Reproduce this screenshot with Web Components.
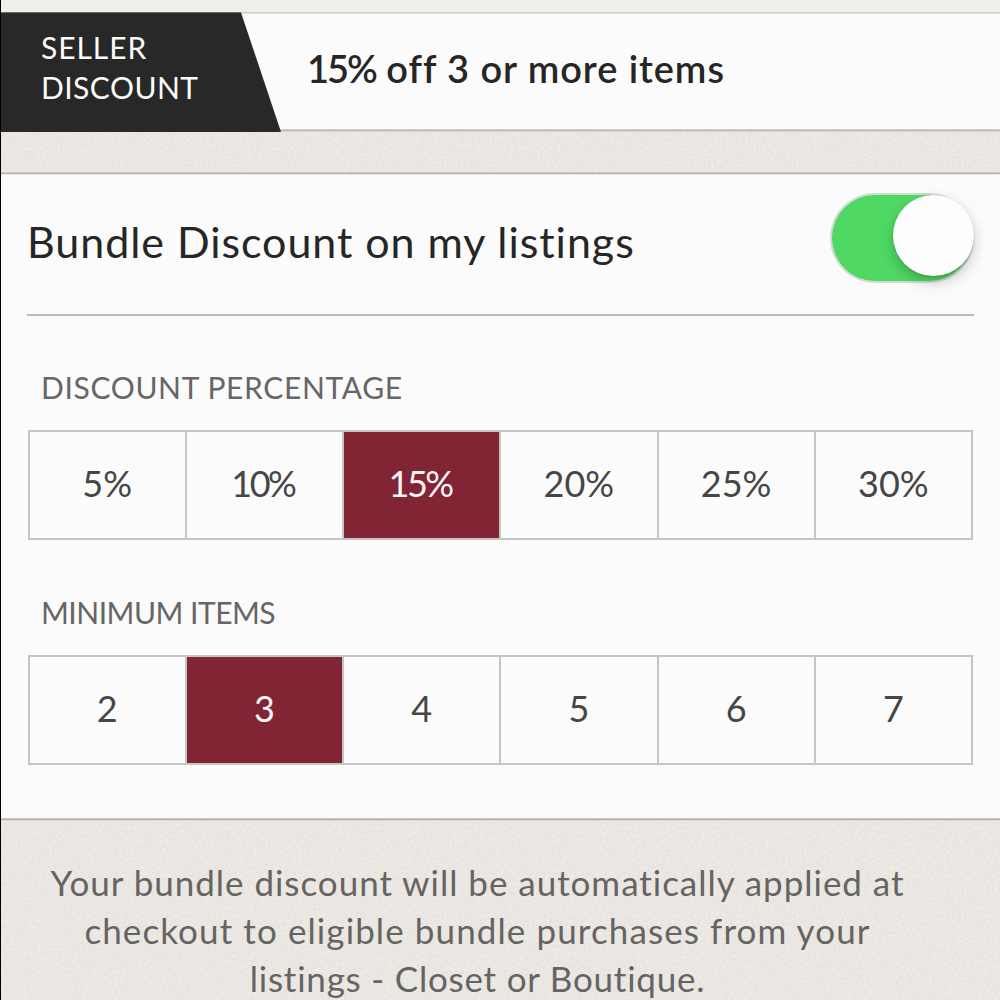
<!DOCTYPE html>
<html lang="en">
<head>
<meta charset="utf-8">
<title>Seller Discount</title>
<style>
    body {
        margin: 0;
        width: 1000px;
        height: 1000px;
        overflow: hidden;
        font-family: Lato, "Open Sans", sans-serif;
        font-kerning: normal;
    }
</style>
</head>
<body>
<discount-screen>
    <seller-banner>
        <span slot="line1" style="letter-spacing: 0.95px">SELLER</span>
        <span slot="line2" style="letter-spacing: 0.45px">DISCOUNT</span>
        <span slot="offer"><span style="letter-spacing: -2px">15%</span> off 3 or more items</span>
    </seller-banner>
    <settings-panel>
        <toggle-row>Bundle Discount on my listings</toggle-row>
        <segment-picker label="DISCOUNT PERCENTAGE" options="5%,10%,15%,20%,25%,30%" value="15%" style="--label-spacing: 0.65px"></segment-picker>
        <segment-picker label="MINIMUM ITEMS" options="2,3,4,5,6,7" value="3" style="--label-spacing: -0.5px"></segment-picker>
    </settings-panel>
    <foot-note>
        <span style="letter-spacing: 0.97px">Your bundle discount will be automatically applied at</span>
        <span style="letter-spacing: 1.1px">checkout to eligible bundle purchases from your</span>
        <span style="letter-spacing: 0.77px">listings - Closet or Boutique.</span>
    </foot-note>
</discount-screen>

<script>
class DiscountScreen extends HTMLElement {
    connectedCallback() {
        this.attachShadow({ mode: 'open' });
        this.shadowRoot.innerHTML = `
            <style>
                :host {
                    display: flex;
                    flex-direction: column;
                    box-sizing: border-box;
                    height: 1000px;
                    border-left: 1px solid #000;
                    background-color: #eae7e2;
                    /* paper grain */
                    background-image: url("data:image/svg+xml,%3Csvg xmlns='http://www.w3.org/2000/svg' width='250' height='250'%3E%3Cfilter id='n' x='0' y='0' width='100%25' height='100%25' color-interpolation-filters='sRGB'%3E%3CfeTurbulence type='fractalNoise' baseFrequency='0.35' numOctaves='2' stitchTiles='stitch'/%3E%3CfeColorMatrix values='0.06 0 0 0 0.889 0.06 0 0 0 0.877 0.06 0 0 0 0.857 0 0 0 0 1'/%3E%3C/filter%3E%3Crect width='250' height='250' filter='url(%23n)'/%3E%3C/svg%3E");
                }
                .top {
                    flex: none;
                    height: 12px;
                    background: #f1efeb;
                }
            </style>
            <div class="top"></div>
            <slot></slot>
        `;
    }
}

class SellerBanner extends HTMLElement {
    connectedCallback() {
        this.attachShadow({ mode: 'open' });
        this.shadowRoot.innerHTML = `
            <style>
                :host {
                    display: flex;
                    flex: none;
                    box-sizing: border-box;
                    height: 120px;
                    margin-bottom: 40px;
                    background: linear-gradient(#c9c9c9 0 1px, #e4e4e4 1px 2px, #fbfbfb 2px 117px, #d0cfcd 117px 118px, #b9b6b3 118px 119px, #d9d6d3 119px);
                }
                .tag {
                    display: flex;
                    flex-direction: column;
                    box-sizing: border-box;
                    width: 280px;
                    padding: 15px 0 0 40px;
                    color: #fbfbfb;
                    font-size: 30px;
                    line-height: 40px;
                    background: linear-gradient(#0c0c0c 0 1px, #282828 1px);
                    clip-path: polygon(0 0.5px, 240px 0.5px, 280px 100%, 0 100%);
                }
                .offer {
                    padding-left: 26px;
                    color: #262626;
                    font-size: 38px;
                    font-weight: 600;
                    line-height: 112px;
                    letter-spacing: 0.95px;
                    white-space: nowrap;
                }
            </style>
            <div class="tag">
                <slot name="line1"></slot>
                <slot name="line2"></slot>
            </div>
            <div class="offer"><slot name="offer"></slot></div>
        `;
    }
}

class SettingsPanel extends HTMLElement {
    connectedCallback() {
        this.attachShadow({ mode: 'open' });
        this.shadowRoot.innerHTML = `
            <style>
                :host {
                    display: flex;
                    flex: none;
                    flex-direction: column;
                    box-sizing: border-box;
                    height: 649px;
                    padding: 21px 27px 0 27px;
                    background: linear-gradient(#cbc9c6 0 1px, #b7b5b3 1px 2px, #e6e5e4 2px 3px, #fbfbfb 3px 646px, #c6c6c6 646px 647px, #b3b2b0 647px 648px, #dcdad6 648px);
                }
            </style>
            <slot></slot>
        `;
    }
}

class ToggleRow extends HTMLElement {
    connectedCallback() {
        this.attachShadow({ mode: 'open' });
        this.shadowRoot.innerHTML = `
            <style>
                :host {
                    display: flex;
                    justify-content: space-between;
                    align-items: flex-start;
                    box-sizing: border-box;
                    height: 123px;
                    border-bottom: 2px solid #bbb;
                    margin-right: -1px;
                    margin-left: -1px;
                }
                .text {
                    color: #262626;
                    font-size: 43px;
                    line-height: 97px;
                    letter-spacing: 0.95px;
                    white-space: nowrap;
                }
                .track {
                    display: flex;
                    justify-content: flex-end;
                    box-sizing: border-box;
                    width: 144px;
                    height: 90px;
                    border: 2px solid #cfdccf;
                    border-right-color: #d8d8d8;
                    border-radius: 45px;
                    background: #4fd964;
                }
                .knob {
                    width: 81px;
                    height: 81px;
                    margin-right: -2px;
                    border-radius: 50%;
                    background: #fdfdfd;
                    box-shadow: 0 6px 14px rgba(0, 0, 0, 0.22), 0 1px 2px rgba(0, 0, 0, 0.15);
                }
            </style>
            <div class="text"><slot></slot></div>
            <div class="track" role="switch" aria-checked="true"><div class="knob"></div></div>
        `;
        const track = this.shadowRoot.querySelector('.track');
        track.addEventListener('click', () => {
            const on = track.getAttribute('aria-checked') === 'true';
            track.setAttribute('aria-checked', String(!on));
            track.style.justifyContent = on ? 'flex-start' : 'flex-end';
            track.style.background = on ? '#fbfbfb' : '#4fd964';
        });
    }
}

class SegmentPicker extends HTMLElement {
    connectedCallback() {
        const value = this.getAttribute('value');
        const cells = this.getAttribute('options').split(',').map(option =>
            `<div class="cell${option === value ? ' active' : ''}${/^1./.test(option) ? ' tight' : ''}">${option}</div>`
        ).join('');

        this.attachShadow({ mode: 'open' });
        this.shadowRoot.innerHTML = `
            <style>
                :host {
                    display: block;
                    flex: none;
                    height: 225px;
                }
                .label {
                    box-sizing: border-box;
                    height: 114px;
                    padding: 51px 0 0 13px;
                    color: #666;
                    font-size: 30px;
                    line-height: 40px;
                    letter-spacing: var(--label-spacing, 0);
                }
                .cells {
                    display: grid;
                    grid-template-columns: repeat(6, 1fr);
                    gap: 2px;
                    box-sizing: border-box;
                    height: 110px;
                    margin-left: -0.5px;
                    border: 2px solid #c6c5c3;
                    background: #c6c5c3;
                }
                .cell {
                    background: #fbfbfb;
                    color: #464646;
                    font-size: 36px;
                    line-height: 102px;
                    text-align: center;
                    cursor: pointer;
                }
                .active {
                    background: #812434;
                    color: #fbf3f4;
                }
                /* a leading 1 carries wide side bearings */
                .tight {
                    padding-right: 3px;
                    letter-spacing: -2.5px;
                }
            </style>
            <div class="label">${this.getAttribute('label')}</div>
            <div class="cells">${cells}</div>
        `;

        const items = this.shadowRoot.querySelectorAll('.cell');
        items.forEach(item => {
            item.addEventListener('click', () => {
                items.forEach(other => other.classList.toggle('active', other === item));
            });
        });
    }
}

class FootNote extends HTMLElement {
    connectedCallback() {
        this.attachShadow({ mode: 'open' });
        this.shadowRoot.innerHTML = `
            <style>
                :host {
                    display: flex;
                    flex: none;
                    flex-direction: column;
                    align-items: center;
                    padding: 37px 46px 0 0;
                    color: #666462;
                    font-size: 35px;
                    line-height: 48px;
                    white-space: nowrap;
                }
            </style>
            <slot></slot>
        `;
    }
}

customElements.define('discount-screen', DiscountScreen);
customElements.define('seller-banner', SellerBanner);
customElements.define('settings-panel', SettingsPanel);
customElements.define('toggle-row', ToggleRow);
customElements.define('segment-picker', SegmentPicker);
customElements.define('foot-note', FootNote);
</script>
</body>
</html>
